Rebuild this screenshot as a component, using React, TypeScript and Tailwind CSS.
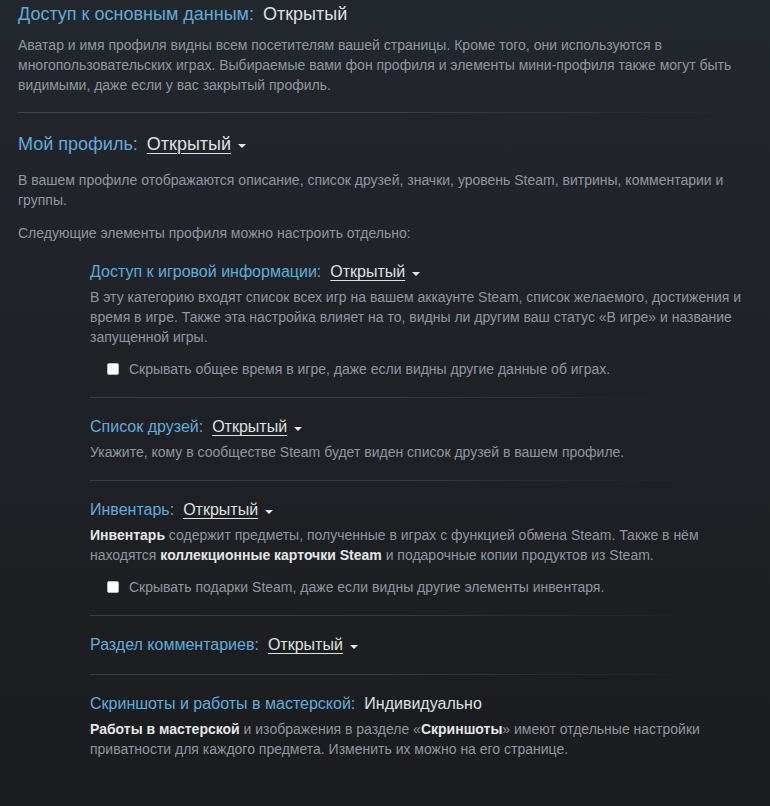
import { ReactNode } from "react";

function Caret() {
  return (
    <svg width="8" height="4" viewBox="0 0 8 4" className="ml-[7px] mt-[3px] inline-block" aria-hidden>
      <path d="M0 0h8L4 4z" fill="#e8e8e8" />
    </svg>
  );
}

function Divider({ wide }: { wide?: boolean }) {
  return (
    <div
      className={
        wide
          ? "h-px w-[720px] bg-gradient-to-r from-[#3f4652] via-[#3b414c] to-transparent"
          : "h-px w-[605px] bg-gradient-to-r from-[#393e47] via-[#363b43] to-transparent"
      }
    />
  );
}

function Dropdown({ value }: { value: string }) {
  return (
    <span className="ml-[9px] inline-flex items-center text-[#dfe1e3]">
      <span className="underline decoration-1 underline-offset-[3px]">{value}</span>
      <Caret />
    </span>
  );
}

function Check({ label }: { label: string }) {
  return (
    <div className="mt-[12px] flex items-center pl-[17px] text-[14px] leading-5 text-[#9197a0]">
      <span className="mr-[10px] h-[12px] w-[12px] rounded-[2px] border border-[#b8b8b8] bg-white" />
      {label}
    </div>
  );
}

function Sub({ title, value, dropdown = true, children }: { title: string; value: string; dropdown?: boolean; children?: ReactNode }) {
  return (
    <div className="py-[18px]">
      <div className="flex items-center text-[16px] leading-[22px]">
        <span className="text-[#62acd9]">{title}</span>
        {dropdown ? <Dropdown value={value} /> : <span className="ml-[9px] text-[#dfe1e3]">{value}</span>}
      </div>
      {children}
    </div>
  );
}

function Desc({ children, className = "" }: { children: ReactNode; className?: string }) {
  return <p className={"text-[14px] leading-5 text-[#9197a0] " + className}>{children}</p>;
}

export default function App() {
  return (
    <div
      className="min-h-[806px] w-full bg-gradient-to-b from-[#23272e] to-[#1b1c1f] px-[18px] pt-[2px] pb-10"
      style={{ fontFamily: '"Liberation Sans", Arial, sans-serif' }}
    >
      <div className="flex items-center text-[18px] leading-6">
        <span className="text-[#62acd9]">Доступ к основным данным:</span>
        <span className="ml-[9px] text-[#dfe1e3]">Открытый</span>
      </div>
      <Desc className="mt-[9px]">
        Аватар и имя профиля видны всем посетителям вашей страницы. Кроме того, они используются в
        многопользовательских играх. Выбираемые вами фон профиля и элементы мини-профиля также могут быть
        видимыми, даже если у вас закрытый профиль.
      </Desc>
      <div className="mt-[17px]">
        <Divider wide />
      </div>

      <div className="mt-[19px] flex items-center text-[18px] leading-6">
        <span className="text-[#62acd9]">Мой профиль:</span>
        <Dropdown value="Открытый" />
      </div>
      <Desc className="mt-[14px]">
        В вашем профиле отображаются описание, список друзей, значки, уровень Steam, витрины, комментарии и
        группы.
      </Desc>
      <Desc className="mt-[13px]">Следующие элементы профиля можно настроить отдельно:</Desc>

      <div className="pl-[72px]">
        <Sub title="Доступ к игровой информации:" value="Открытый">
          <Desc className="mt-[4px]">
            В эту категорию входят список всех игр на вашем аккаунте Steam, список желаемого, достижения и
            время в игре. Также эта настройка влияет на то, видны ли другим ваш статус «В игре» и название
            запущенной игры.
          </Desc>
          <Check label="Скрывать общее время в игре, даже если видны другие данные об играх." />
        </Sub>
        <Divider />
        <Sub title="Список друзей:" value="Открытый">
          <Desc className="mt-[4px]">Укажите, кому в сообществе Steam будет виден список друзей в вашем профиле.</Desc>
        </Sub>
        <Divider />
        <Sub title="Инвентарь:" value="Открытый">
          <Desc className="mt-[4px]">
            <b className="font-bold text-[#e4e6e8]">Инвентарь</b> содержит предметы, полученные в играх с функцией
            обмена Steam. Также в нём находятся <b className="font-bold text-[#e4e6e8]">коллекционные карточки Steam</b> и
            подарочные копии продуктов из Steam.
          </Desc>
          <Check label="Скрывать подарки Steam, даже если видны другие элементы инвентаря." />
        </Sub>
        <Divider />
        <Sub title="Раздел комментариев:" value="Открытый" />
        <Divider />
        <Sub title="Скриншоты и работы в мастерской:" value="Индивидуально" dropdown={false}>
          <Desc className="mt-[4px]">
            <b className="font-bold text-[#e4e6e8]">Работы в мастерской</b> и изображения в разделе «
            <b className="font-bold text-[#e4e6e8]">Скриншоты</b>» имеют отдельные настройки приватности для каждого
            предмета. Изменить их можно на его странице.
          </Desc>
        </Sub>
      </div>
    </div>
  );
}
